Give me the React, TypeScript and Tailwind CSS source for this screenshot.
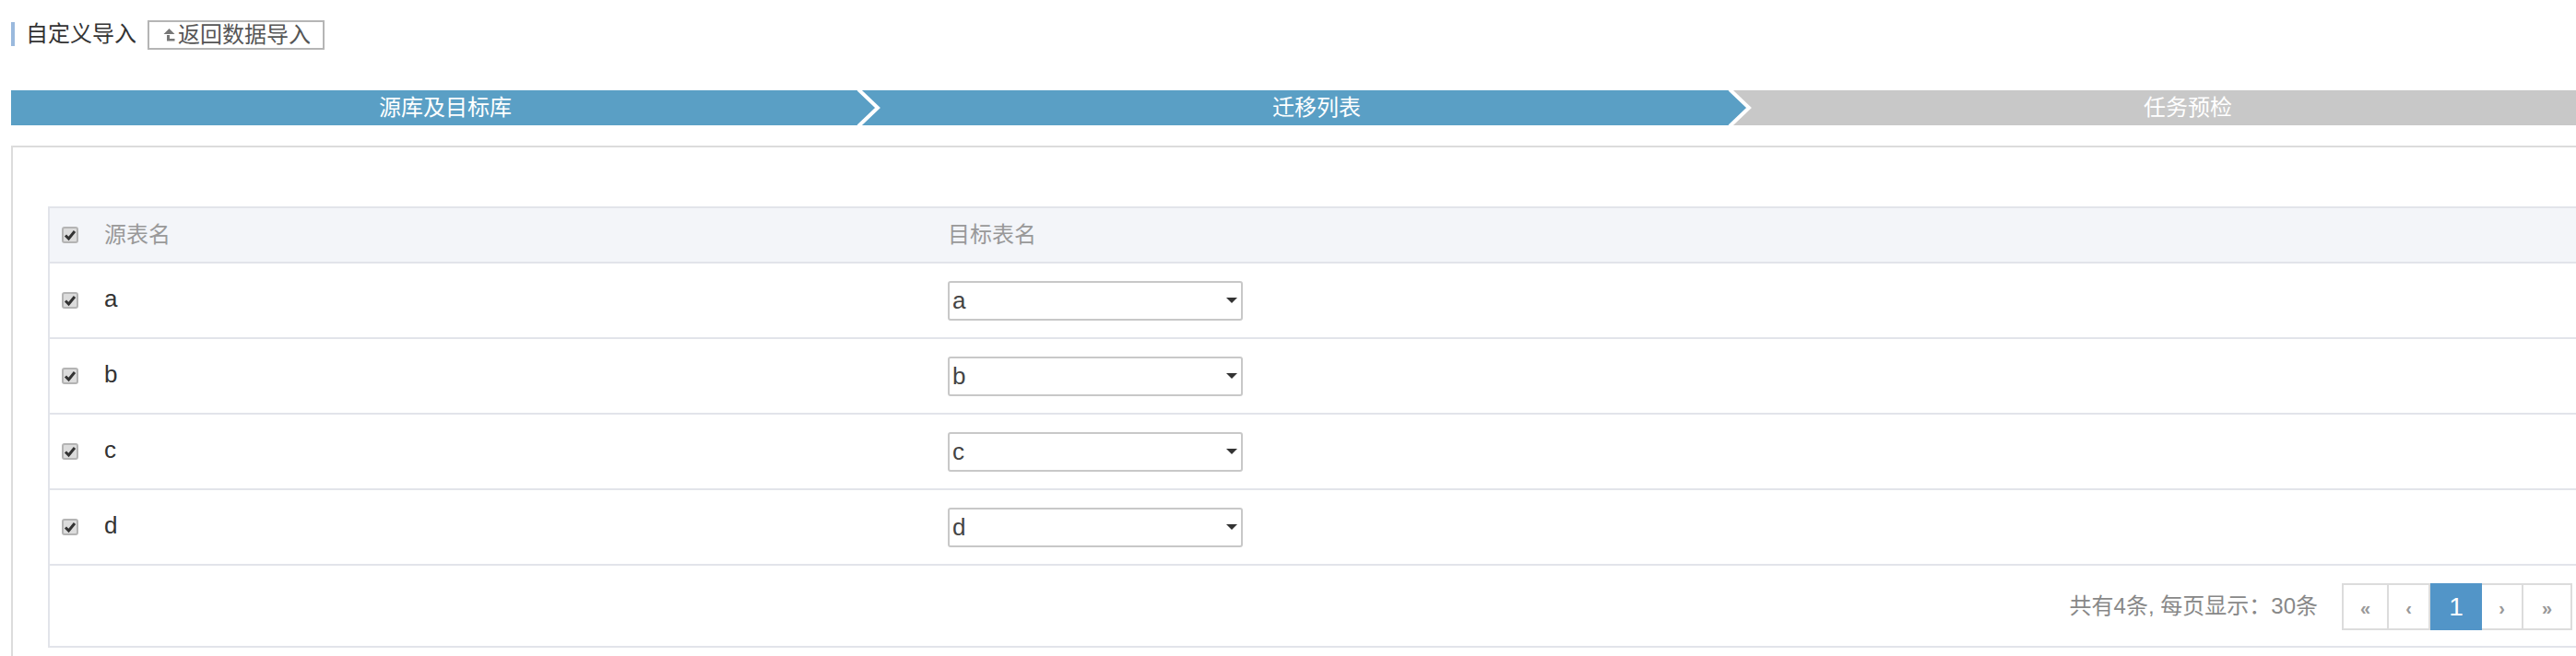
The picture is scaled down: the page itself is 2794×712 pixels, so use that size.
const rows = ['a', 'b', 'c', 'd'];

const steps = [
  { label: '源库及目标库', bg: 'bg-[#5a9fc5]', next: '#5a9fc5' },
  { label: '迁移列表', bg: 'bg-[#5a9fc5]', next: '#c8c8c8' },
  { label: '任务预检', bg: 'bg-[#c8c8c8]' },
];

const pager = [
  { label: '«', w: 'w-[49px]' },
  { label: '‹', w: 'w-[45px]' },
  { label: '1', w: 'w-[56px]', active: true },
  { label: '›', w: 'w-[45px]' },
  { label: '»', w: 'w-[51px]' },
];

function Check() {
  return (
    <span className="flex h-[18px] w-[18px] shrink-0 items-center justify-center rounded-[3px] border-2 border-[#b4b4b4] bg-[#dcdcdc]">
      <svg viewBox="0 0 14 14" className="h-[14px] w-[14px]">
        <path d="M2 7.5 L5.5 11 L12 3" fill="none" stroke="#333" strokeWidth="3" />
      </svg>
    </span>
  );
}

function Row({ name }: { name: string }) {
  return (
    <div className="flex h-[82px] items-center border-b-2 border-[#e2e4ea]">
      <div className="flex w-[974px] items-center pl-[13px]">
        <Check />
        <span className="relative top-[-2px] ml-[28px] text-[26px] text-[#333]">{name}</span>
      </div>
      <div className="flex h-[43px] w-[320px] items-center justify-between rounded-[3px] border-2 border-[#c8c8c8] pl-[3px] pr-[4px] text-[26px] text-[#444]">
        <span>{name}</span>
        <svg viewBox="0 0 12 6" className="h-[6px] w-[12px]">
          <path d="M0 0 H12 L6 6 Z" fill="#333" />
        </svg>
      </div>
    </div>
  );
}

export default function App() {
  return (
    <div className="h-[712px] w-[2794px] overflow-hidden bg-white font-['Liberation_Sans','Noto_Sans_CJK_SC',sans-serif] text-[24px]">
      <div className="w-[2860px] pl-[12px]">
        <div className="flex h-[98px] items-start pt-[22px]">
          <div className="mt-[2px] flex h-[26px] items-center border-l-4 border-[#9ab9dd] pl-[12px] text-[#333]">
            自定义导入
          </div>
          <button className="ml-[12px] flex h-[32px] w-[192px] items-center border-2 border-[#b5b5b5] pl-[15px] text-[#555]">
            <svg viewBox="0 0 13 14" className="mr-[3px] h-[14px] w-[13px]">
              <path d="M6.5 0 L12.5 6 H0.5 Z M4 7 H7 V11 H12.5 V13.5 H4 Z" fill="#777" />
            </svg>
            返回数据导入
          </button>
        </div>

        <div className="flex h-[38px]">
          {steps.map((s) => (
            <div key={s.label} className={`relative flex w-[945px] items-center justify-center pr-[3px] text-white ${s.bg}`}>
              {s.label}
              {s.next && (
                <svg viewBox="0 0 30 38" className="absolute right-0 top-0 z-10 h-[38px] w-[30px]">
                  <path d="M4 0 L25 19 L4 38 H30 V0 Z" fill={s.next} />
                  <path d="M4 -1 L25 19 L4 39" fill="none" stroke="#fff" strokeWidth="4" />
                </svg>
              )}
            </div>
          ))}
        </div>

        <div className="mt-[22px] h-[560px] border-2 border-[#dcdcdc] pl-[38px] pt-[64px]">
          <div className="border-2 border-[#e2e4ea]">
            <div className="flex h-[60px] items-center border-b-2 border-[#e2e4ea] bg-[#f3f5f9] text-[#999]">
              <div className="flex w-[974px] items-center pl-[13px]">
                <Check />
                <span className="ml-[28px]">源表名</span>
              </div>
              <span>目标表名</span>
            </div>
            {rows.map((r) => (
              <Row key={r} name={r} />
            ))}
            <div className="flex h-[87px] w-[2736px] items-start justify-end pt-[19px]">
              <span className="mr-[26px] mt-[7px] text-[#888]">共有4条, 每页显示：30条</span>
              <div className="flex h-[51px] border-2 border-[#dcdcdc]">
                {pager.map((p) => (
                  <span
                    key={p.label}
                    className={
                      p.active
                        ? `-my-[2px] flex items-center justify-center bg-[#5295c8] text-[28px] text-white ${p.w}`
                        : `flex items-center justify-center border-r-2 border-[#dcdcdc] pt-[3px] text-[20px] font-bold text-[#999] last:border-r-0 ${p.w}`
                    }
                  >
                    {p.label}
                  </span>
                ))}
              </div>
            </div>
          </div>
        </div>
      </div>
    </div>
  );
}
